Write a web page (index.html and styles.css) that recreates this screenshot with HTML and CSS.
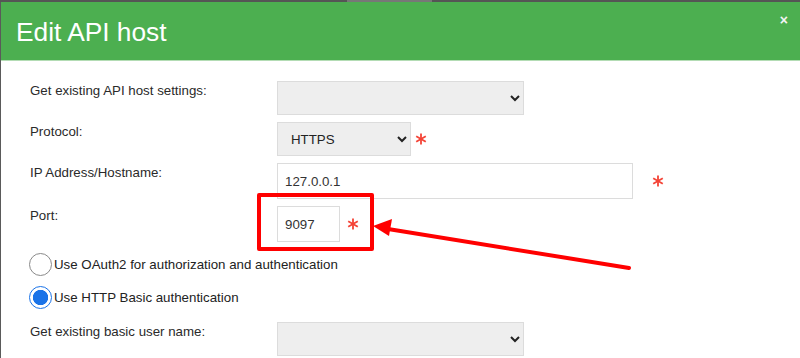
FILE: index.html
```html
<!DOCTYPE html>
<html lang="en">
<head>
<meta charset="utf-8">
<title>Edit API host</title>
<link rel="stylesheet" href="styles.css">
</head>
<body>
<div class="topbar"><span class="topbar-light"></span></div>
<div class="dialog">
  <div class="dialog-header">
    <h1 class="dialog-title">Edit API host</h1>
    <span class="close">&#215;</span>
  </div>
  <div class="dialog-body">
    <div class="form">
      <div class="row">
        <label class="label">Get existing API host settings:</label>
        <div class="control">
          <select class="select select-wide"><option></option></select>
        </div>
      </div>
      <div class="row">
        <label class="label">Protocol:</label>
        <div class="control">
          <select class="select select-protocol"><option>HTTPS</option></select>
          <svg class="req req-protocol" viewBox="0 0 12 12" width="12" height="12"><g stroke="#f44336" stroke-width="1.8" stroke-linecap="butt"><line x1="6" y1="0.5" x2="6" y2="11.5"/><line x1="1.2" y1="3.2" x2="10.8" y2="8.8"/><line x1="1.2" y1="8.8" x2="10.8" y2="3.2"/></g></svg>
        </div>
      </div>
      <div class="row">
        <label class="label">IP Address/Hostname:</label>
        <div class="control">
          <input class="input input-host" type="text" value="127.0.0.1">
          <svg class="req req-host" viewBox="0 0 12 12" width="12" height="12"><g stroke="#f44336" stroke-width="1.8"><line x1="6" y1="0.5" x2="6" y2="11.5"/><line x1="1.2" y1="3.2" x2="10.8" y2="8.8"/><line x1="1.2" y1="8.8" x2="10.8" y2="3.2"/></g></svg>
        </div>
      </div>
      <div class="row">
        <label class="label">Port:</label>
        <div class="control">
          <input class="input input-port" type="text" value="9097">
          <svg class="req req-port" viewBox="0 0 12 12" width="12" height="12"><g stroke="#f44336" stroke-width="1.8"><line x1="6" y1="0.5" x2="6" y2="11.5"/><line x1="1.2" y1="3.2" x2="10.8" y2="8.8"/><line x1="1.2" y1="8.8" x2="10.8" y2="3.2"/></g></svg>
        </div>
      </div>
      <div class="radios">
        <label class="radio-row"><input class="radio" type="radio" name="auth"><span>Use OAuth2 for authorization and authentication</span></label>
        <label class="radio-row"><input class="radio" type="radio" name="auth" checked><span>Use HTTP Basic authentication</span></label>
      </div>
      <div class="row">
        <label class="label">Get existing basic user name:</label>
        <div class="control">
          <select class="select select-wide"><option></option></select>
        </div>
      </div>
    </div>
  </div>
</div>
<div class="highlight"></div>
<svg class="arrow" width="800" height="358" viewBox="0 0 800 358">
  <line x1="629" y1="268" x2="388" y2="229" stroke="#ff0000" stroke-width="4" stroke-linecap="round"/>
  <polygon points="373,226 392,219 389,236" fill="#ff0000"/>
</svg>
</body>
</html>
```
FILE: styles.css
```css
html, body {
  margin: 0;
  padding: 0;
}
body {
  width: 800px;
  height: 358px;
  overflow: hidden;
  background: #5a5a5a;
  font-family: "Liberation Sans", Arial, sans-serif;
  position: relative;
}
.topbar {
  height: 2px;
  background: #555;
  position: relative;
}
.topbar-light {
  position: absolute;
  left: 347px;
  top: 0;
  width: 85px;
  height: 2px;
  background: #777;
}
.dialog {
  margin-left: 1px;
  background: #fff;
  height: 356px;
}
.dialog-header {
  height: 58px;
  background: #4caf50;
  border-bottom: 1px solid #b3dcb4;
  display: flex;
  align-items: center;
  position: relative;
}
.dialog-title {
  margin: 0 0 0 15px;
  font-weight: normal;
  font-size: 26.3px;
  color: #fff;
  line-height: 1;
  position: relative;
  top: 1px;
}
.close {
  position: absolute;
  right: 12px;
  top: 11px;
  color: #f4f4f4;
  font-size: 14px;
  font-weight: bold;
  line-height: 1;
}
.dialog-body {
  padding: 20px 0 0 29px;
}
.form {
  display: flex;
  flex-direction: column;
  gap: 7px;
}
.row {
  display: flex;
  align-items: flex-start;
}
.label {
  width: 247px;
  flex: none;
  font-size: 13.3px;
  line-height: 20px;
  color: #2a2a2a;
}
.control {
  display: flex;
  align-items: center;
}
.select {
  height: 34px;
  box-sizing: border-box;
  background-color: #eeeeee;
  border: 1px solid #dcdcdc;
  border-radius: 0;
  font-family: "Liberation Sans", Arial, sans-serif;
  font-size: 13.3px;
  color: #222;
  padding: 0 0 0 9px;
  margin: 0;
}
.select-wide {
  width: 247px;
}
.select-protocol {
  width: 134px;
}
.input {
  height: 36px;
  box-sizing: border-box;
  border: 1px solid #dcdcdc;
  border-radius: 0;
  background: #fff;
  font-family: "Liberation Sans", Arial, sans-serif;
  font-size: 13.3px;
  color: #333;
  padding: 0 7px;
  margin: 0;
  outline: none;
}
.input-host {
  width: 356px;
}
.input-port {
  width: 63px;
}
.req {
  flex: none;
  display: block;
}
.req-protocol {
  margin-left: 4px;
}
.req-host {
  margin-left: 19px;
}
.req-port {
  margin-left: 7px;
}
.radios {
  display: flex;
  flex-direction: column;
  gap: 9px;
  margin: 3px 0 6px -1px;
}
.radio-row {
  display: flex;
  align-items: center;
  gap: 2px;
  font-size: 13.3px;
  color: #222;
  height: 24px;
}
.radio {
  appearance: none;
  -webkit-appearance: none;
  width: 23px;
  height: 23px;
  margin: 0;
  border: 1px solid #8a8a8a;
  border-radius: 50%;
  background: #fff;
  box-sizing: border-box;
}
.radio:checked {
  border: 1.5px solid #1a73e8;
  background: radial-gradient(circle, #1a73e8 0 7.3px, #fff 8px);
}
.highlight {
  position: absolute;
  left: 257px;
  top: 193px;
  width: 117px;
  height: 58px;
  box-sizing: border-box;
  border: 4px solid #ff0000;
  border-radius: 2px;
}
.arrow {
  position: absolute;
  left: 0;
  top: 0;
  pointer-events: none;
}
```
